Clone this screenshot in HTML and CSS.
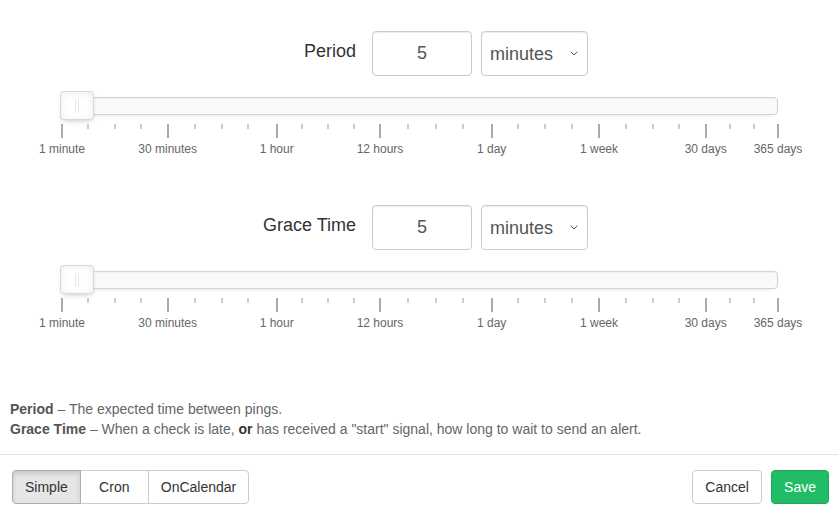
FILE: index.html
```html
<!DOCTYPE html>
<html lang="en">
<head>
<meta charset="utf-8">
<title>Schedule</title>
<link rel="stylesheet" href="styles.css">
</head>
<body>
<div class="modal">
  <div class="modal-body">
    <section class="group">
      <div class="field-row">
        <label class="field-label" for="period-value">Period</label>
        <input class="form-control value-input" id="period-value" type="text" value="5">
        <select class="form-control unit-select">
          <option>minutes</option>
          <option>hours</option>
          <option>days</option>
        </select>
      </div>
      <div class="slider">
        <div class="track">
          <div class="handle" style="left:14.5px"></div>
        </div>
        <div class="pips">
          <span class="marker large" style="left:0px"></span>
          <span class="marker" style="left:26.3px"></span>
          <span class="marker" style="left:52.8px"></span>
          <span class="marker" style="left:79px"></span>
          <span class="marker large" style="left:105.7px"></span>
          <span class="marker" style="left:133px"></span>
          <span class="marker" style="left:159.8px"></span>
          <span class="marker" style="left:186.3px"></span>
          <span class="marker large" style="left:214.7px"></span>
          <span class="marker" style="left:239.8px"></span>
          <span class="marker" style="left:265.8px"></span>
          <span class="marker" style="left:292px"></span>
          <span class="marker large" style="left:318px"></span>
          <span class="marker" style="left:345.8px"></span>
          <span class="marker" style="left:373.7px"></span>
          <span class="marker" style="left:401.4px"></span>
          <span class="marker large" style="left:429.7px"></span>
          <span class="marker" style="left:455.8px"></span>
          <span class="marker" style="left:483px"></span>
          <span class="marker" style="left:510px"></span>
          <span class="marker large" style="left:537px"></span>
          <span class="marker" style="left:564px"></span>
          <span class="marker" style="left:590.7px"></span>
          <span class="marker" style="left:617.3px"></span>
          <span class="marker large" style="left:643.7px"></span>
          <span class="marker" style="left:668px"></span>
          <span class="marker" style="left:691.8px"></span>
          <span class="marker large" style="left:716px"></span>
          <span class="pip-value" style="left:0px">1 minute</span>
          <span class="pip-value" style="left:105.7px">30 minutes</span>
          <span class="pip-value" style="left:214.7px">1 hour</span>
          <span class="pip-value" style="left:318px">12 hours</span>
          <span class="pip-value" style="left:429.7px">1 day</span>
          <span class="pip-value" style="left:537px">1 week</span>
          <span class="pip-value" style="left:643.7px">30 days</span>
          <span class="pip-value" style="left:716px">365 days</span>
        </div>
      </div>
    </section>

    <section class="group">
      <div class="field-row">
        <label class="field-label" for="grace-value">Grace Time</label>
        <input class="form-control value-input" id="grace-value" type="text" value="5">
        <select class="form-control unit-select">
          <option>minutes</option>
          <option>hours</option>
          <option>days</option>
        </select>
      </div>
      <div class="slider">
        <div class="track">
          <div class="handle" style="left:14.5px"></div>
        </div>
        <div class="pips">
          <span class="marker large" style="left:0px"></span>
          <span class="marker" style="left:26.3px"></span>
          <span class="marker" style="left:52.8px"></span>
          <span class="marker" style="left:79px"></span>
          <span class="marker large" style="left:105.7px"></span>
          <span class="marker" style="left:133px"></span>
          <span class="marker" style="left:159.8px"></span>
          <span class="marker" style="left:186.3px"></span>
          <span class="marker large" style="left:214.7px"></span>
          <span class="marker" style="left:239.8px"></span>
          <span class="marker" style="left:265.8px"></span>
          <span class="marker" style="left:292px"></span>
          <span class="marker large" style="left:318px"></span>
          <span class="marker" style="left:345.8px"></span>
          <span class="marker" style="left:373.7px"></span>
          <span class="marker" style="left:401.4px"></span>
          <span class="marker large" style="left:429.7px"></span>
          <span class="marker" style="left:455.8px"></span>
          <span class="marker" style="left:483px"></span>
          <span class="marker" style="left:510px"></span>
          <span class="marker large" style="left:537px"></span>
          <span class="marker" style="left:564px"></span>
          <span class="marker" style="left:590.7px"></span>
          <span class="marker" style="left:617.3px"></span>
          <span class="marker large" style="left:643.7px"></span>
          <span class="marker" style="left:668px"></span>
          <span class="marker" style="left:691.8px"></span>
          <span class="marker large" style="left:716px"></span>
          <span class="pip-value" style="left:0px">1 minute</span>
          <span class="pip-value" style="left:105.7px">30 minutes</span>
          <span class="pip-value" style="left:214.7px">1 hour</span>
          <span class="pip-value" style="left:318px">12 hours</span>
          <span class="pip-value" style="left:429.7px">1 day</span>
          <span class="pip-value" style="left:537px">1 week</span>
          <span class="pip-value" style="left:643.7px">30 days</span>
          <span class="pip-value" style="left:716px">365 days</span>
        </div>
      </div>
    </section>

    <div class="help">
      <p><strong>Period</strong> – The expected time between pings.</p>
      <p><strong>Grace Time</strong> – When a check is late, <strong class="dark">or</strong> has received a "start" signal, how long to wait to send an alert.</p>
    </div>
  </div>

  <div class="modal-footer">
    <div class="btn-group">
      <button class="btn active" type="button">Simple</button>
      <button class="btn btn-wide" type="button">Cron</button>
      <button class="btn" type="button">OnCalendar</button>
    </div>
    <div class="actions">
      <button class="btn btn-default" type="button">Cancel</button>
      <button class="btn btn-primary" type="button">Save</button>
    </div>
  </div>
</div>
</body>
</html>
```

FILE: styles.css
```css
* {
  box-sizing: border-box;
}

html, body {
  margin: 0;
  padding: 0;
  background: #fff;
}

body {
  font-family: "Liberation Sans", Arial, sans-serif;
  font-size: 14px;
  line-height: 20px;
  color: #333;
  overflow: hidden;
}

.modal {
  width: 838px;
}

.modal-body {
  padding: 31px 0 15px 0;
}

.group + .group {
  margin-top: 47px;
}

.field-row {
  display: flex;
  align-items: flex-start;
  height: 45px;
}

.field-label {
  flex: 0 0 372px;
  padding: 10px 16px 0 0;
  text-align: right;
  font-size: 18px;
  line-height: 20px;
  color: #333;
}

.form-control {
  height: 45px;
  border: 1px solid #ccc;
  border-radius: 4px;
  background-color: #fff;
  box-shadow: inset 0 1px 1px rgba(0, 0, 0, 0.075);
  font-family: "Liberation Sans", Arial, sans-serif;
  font-size: 18px;
  color: #555;
  outline: none;
}

.value-input {
  width: 100px;
  padding: 0 8px;
  text-align: center;
}

.unit-select {
  width: 107px;
  margin-left: 9px;
  padding: 0 24px 0 8px;
  -webkit-appearance: none;
  appearance: none;
  background-image: url("data:image/svg+xml,%3Csvg xmlns='http://www.w3.org/2000/svg' width='8' height='5' viewBox='0 0 8 5'%3E%3Cpath d='M0.7 0.7 L4 4 L7.3 0.7' fill='none' stroke='%23555' stroke-width='1'/%3E%3C/svg%3E");
  background-repeat: no-repeat;
  background-position: right 9px center;
  background-size: 8px 5px;
}

/* slider */
.slider {
  margin: 21px 60px 0 62px;
  width: 716px;
}

.track {
  position: relative;
  height: 18px;
  background: #fafafa;
  border: 1px solid #d3d3d3;
  border-radius: 4px;
  box-shadow: inset 0 1px 1px #f0f0f0, 0 3px 6px -5px #bbb;
}

.handle {
  position: absolute;
  top: -7px;
  width: 34px;
  height: 29px;
  margin-left: -18px;
  background: #fff;
  border: 1px solid #d9d9d9;
  border-radius: 3px;
  box-shadow: inset 0 0 1px #fff, inset 0 1px 7px #ebebeb, 0 3px 6px -3px #bbb;
}

.handle::before,
.handle::after {
  content: "";
  position: absolute;
  top: 7px;
  left: 14px;
  width: 1px;
  height: 14px;
  background: #e8e7e6;
}

.handle::after {
  left: 17px;
}

.pips {
  position: relative;
  height: 34px;
  margin-top: 9px;
}

.marker {
  position: absolute;
  top: 0;
  width: 2px;
  height: 5px;
  margin-left: -1px;
  background: #ccc;
}

.marker.large {
  height: 14px;
  background: #aaa;
}

.pip-value {
  position: absolute;
  top: 18px;
  transform: translateX(-50%);
  white-space: nowrap;
  font-size: 12px;
  line-height: 14px;
  color: #666;
}

/* help text */
.help {
  margin-top: 67px;
  padding-left: 10px;
  color: #666;
}

.help p {
  margin: 0;
}

.help strong {
  color: #555;
}

.help strong.dark {
  color: #333;
}

/* footer */
.modal-footer {
  display: flex;
  justify-content: space-between;
  align-items: flex-start;
  padding: 15px 9px 15px 12px;
  border-top: 1px solid #e5e5e5;
}

.btn-group {
  display: flex;
}

.btn {
  height: 34px;
  padding: 6px 12px;
  font-family: "Liberation Sans", Arial, sans-serif;
  font-size: 14px;
  line-height: 20px;
  color: #333;
  background: #fff;
  border: 1px solid #ccc;
  border-radius: 4px;
  cursor: pointer;
}

.btn-group .btn {
  border-radius: 0;
}

.btn-group .btn + .btn {
  margin-left: -1px;
}

.btn-group .btn:first-child {
  border-radius: 4px 0 0 4px;
}

.btn-group .btn:last-child {
  border-radius: 0 4px 4px 0;
}

.btn-group .btn.active {
  background: #e6e6e6;
  border-color: #adadad;
  box-shadow: inset 0 3px 5px rgba(0, 0, 0, 0.125);
  position: relative;
  z-index: 1;
}

.btn-wide {
  min-width: 69px;
}

.btn-group .btn:last-child {
  min-width: 101px;
}

.actions {
  display: flex;
  gap: 9px;
}

.btn-default {
  min-width: 70px;
}

.btn-primary {
  color: #fff;
  background: #22bc66;
  border-color: #1fa95c;
}
```
